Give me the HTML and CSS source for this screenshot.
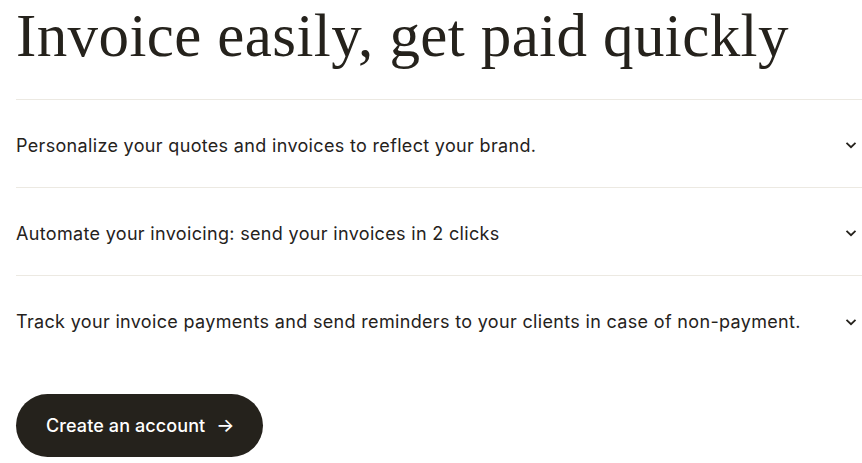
FILE: index.html
```html
<!DOCTYPE html>
<html lang="en">
<head>
<meta charset="utf-8">
<link rel="stylesheet" href="styles.css">
</head>
<body>
<main class="page">
  <h1 class="title">Invoice easily, get paid quickly</h1>
  <ul class="faq">
    <li class="item"><span>Personalize your quotes and invoices to reflect your brand.</span><svg class="chev" viewBox="0 0 12 8"><path d="M1.5 1.8 6 6.2 10.5 1.8" fill="none" stroke="currentColor" stroke-width="1.8"/></svg></li>
    <li class="item"><span>Automate your invoicing: send your invoices in 2 clicks</span><svg class="chev" viewBox="0 0 12 8"><path d="M1.5 1.8 6 6.2 10.5 1.8" fill="none" stroke="currentColor" stroke-width="1.8"/></svg></li>
    <li class="item"><span>Track your invoice payments and send reminders to your clients in case of non-payment.</span><svg class="chev" viewBox="0 0 12 8"><path d="M1.5 1.8 6 6.2 10.5 1.8" fill="none" stroke="currentColor" stroke-width="1.8"/></svg></li>
  </ul>
  <a class="cta" href="#">Create an account <span class="arrow">&rarr;</span></a>
</main>
</body>
</html>
```
FILE: styles.css
```css
html, body { margin: 0; padding: 0; background: #ffffff; }
body { color: #25221c; font-family: "Inter", "Noto Sans", sans-serif; }
.page { padding: 0 0 0 16px; }
.title {
  margin: 0;
  font-family: "Liberation Serif", serif;
  font-weight: 400;
  font-size: 61px;
  line-height: 72px;
  height: 99px;
  letter-spacing: 0.4px;
  color: #25221c;
}
.faq { list-style: none; margin: 0; padding: 0; border-top: 1px solid #ece9e2; }
.item {
  display: flex;
  align-items: center;
  justify-content: space-between;
  box-sizing: border-box;
  height: 88px;
  padding: 3px 5px 0 0;
  border-bottom: 1px solid #ece9e2;
  font-size: 18px;
  letter-spacing: 0.33px;
}
.item:last-child { border-bottom: none; }
.chev { width: 12px; height: 8px; color: #25221c; }
.cta {
  display: inline-flex;
  align-items: center;
  gap: 11px;
  margin-top: 30px;
  height: 63px;
  padding: 0 28px 0 30px;
  border-radius: 32px;
  background: #25221c;
  color: #ffffff;
  text-decoration: none;
  font-size: 18px;
  font-weight: 500;
  letter-spacing: 0.1px;
}
.arrow { font-size: 19px; }
```
